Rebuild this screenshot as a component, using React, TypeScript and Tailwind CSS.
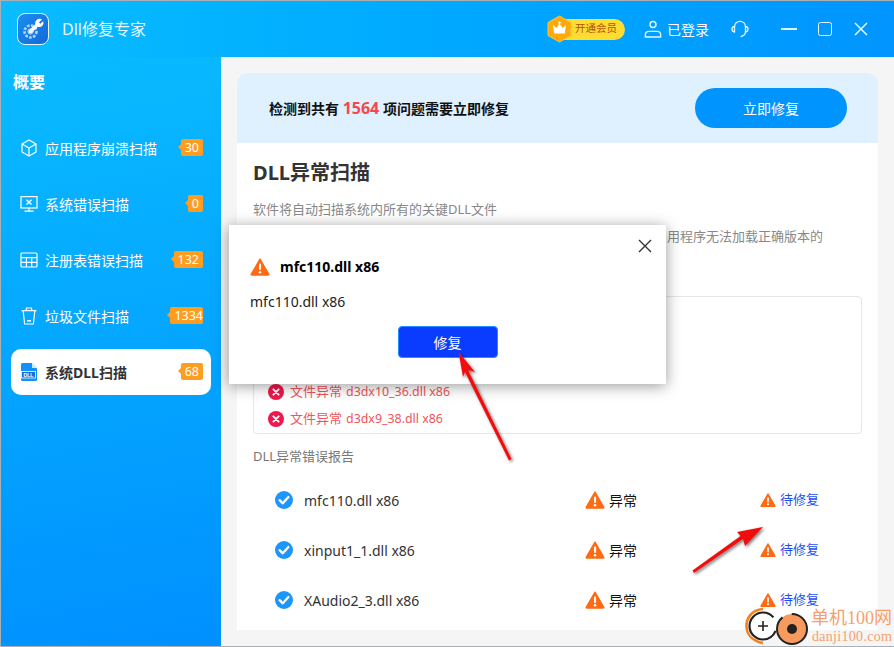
import React from "react";

const FONT = "font-['Noto_Sans','Noto_Sans_CJK_SC',sans-serif]";

function Warn({ size = 20, className = "" }: { size?: number; className?: string }) {
  return (
    <svg width={size} height={size} viewBox="0 0 20 20" className={className}>
      <path d="M10 2.2 L18.8 17.4 Q19 18 18.2 18 L1.8 18 Q1 18 1.2 17.4 Z" fill="#ff6a13" stroke="#ff6a13" strokeWidth="1.4" strokeLinejoin="round" />
      <rect x="9" y="6.5" width="2.1" height="6.6" rx="1" fill="#fff" />
      <circle cx="10" cy="15.2" r="1.25" fill="#fff" />
    </svg>
  );
}

function ErrorDot() {
  return (
    <svg width="16" height="16" viewBox="0 0 16 16">
      <circle cx="8" cy="8" r="8" fill="#f0174c" />
      <path d="M5.4 5.4 L10.6 10.6 M10.6 5.4 L5.4 10.6" stroke="#fff" strokeWidth="2" strokeLinecap="round" />
    </svg>
  );
}

function Check() {
  return (
    <svg width="18" height="18" viewBox="0 0 18 18">
      <circle cx="9" cy="9" r="9" fill="#1c96fb" />
      <path d="M4.6 9.2 L7.8 12.3 L13.4 6" fill="none" stroke="#fff" strokeWidth="2.3" strokeLinecap="round" strokeLinejoin="round" />
    </svg>
  );
}

function CubeIcon() {
  return (
    <svg width="18" height="18" viewBox="0 0 18 18" fill="none" stroke="#fff" strokeWidth="1.2" strokeLinejoin="round">
      <path d="M9 1 L16 5 L16 13 L9 17 L2 13 L2 5 Z" />
      <path d="M2 5 L9 9 L16 5 M9 9 L9 17" />
    </svg>
  );
}
function MonitorIcon() {
  return (
    <svg width="18" height="18" viewBox="0 0 18 18" fill="none" stroke="#fff" strokeWidth="1.2">
      <rect x="1" y="1.6" width="16" height="11.4" />
      <path d="M6.5 4.8 L11.5 9.6 M11.5 4.8 L6.5 9.6" strokeWidth="1.4" />
      <path d="M9 13 L9 16 M4.5 16.2 L13.5 16.2" />
    </svg>
  );
}
function TableIcon() {
  return (
    <svg width="18" height="16" viewBox="0 0 18 16" fill="none" stroke="#fff" strokeWidth="1.2">
      <rect x="1" y="1" width="16" height="14" rx="1" />
      <path d="M1 5.6 L17 5.6 M1 10.3 L17 10.3 M6.4 5.6 L6.4 15 M11.7 5.6 L11.7 15" />
    </svg>
  );
}
function TrashIcon() {
  return (
    <svg width="18" height="18" viewBox="0 0 18 18" fill="none" stroke="#fff" strokeWidth="1.2">
      <path d="M1.6 3.6 L16.4 3.6 M6 3.4 L6.6 1 L11.4 1 L12 3.4" />
      <path d="M3.2 3.8 L4.6 17 L13.4 17 L14.8 3.8" />
      <path d="M7 13.8 L11 13.8" strokeWidth="1.6" />
    </svg>
  );
}
function DllIcon() {
  return (
    <svg width="18" height="20" viewBox="0 0 18 20">
      <path d="M2.5 1 L11.5 1 L17 6.5 L17 17.5 Q17 19 15.5 19 L2.5 19 Q1 19 1 17.5 L1 2.5 Q1 1 2.5 1 Z" fill="#1590fb" />
      <path d="M12 1.2 L16.8 6 L12 6 Z" fill="#cfe8ff" />
      <rect x="1.5" y="9.5" width="14" height="6.5" fill="#0f72da" stroke="#fff" strokeWidth="0.8" />
      <text x="8.5" y="14.8" textAnchor="middle" fontSize="5.2" fontWeight="700" fill="#fff" fontFamily="'Liberation Sans', sans-serif">DLL</text>
    </svg>
  );
}

function Logo() {
  return (
    <div className="w-[32px] h-[32px] rounded-[8px] border-[1.5px] border-[#e6f6ff] bg-gradient-to-br from-[#1c8ef2] to-[#1468d8] flex items-center justify-center">
      <svg width="26" height="26" viewBox="0 0 26 26" fill="none">
        <circle cx="10.5" cy="15.5" r="6" stroke="#a9d8fb" strokeWidth="2.6" strokeDasharray="2.6 1.4" />
        <circle cx="10.5" cy="15.5" r="2.6" fill="#1468d8" stroke="#cfeaff" strokeWidth="1" />
        <path d="M10.5 15.5 L18 8" stroke="#fff" strokeWidth="3.8" strokeLinecap="round" />
        <path d="M15.2 7.4 C15.2 3.8 19 1.8 22 3.4 L18.8 6.4 L20 8 L23.2 5.2 C24.2 8.6 21.6 12 18 10.8 Z" fill="#fff" />
      </svg>
    </div>
  );
}

function Badge({ n }: { n: string }) {
  return (
    <span className={`relative h-[17px] mb-[1px] min-w-[15px] rounded-[2px] bg-[#ff9d21] text-white text-[12.5px] leading-[17px] text-center ${n.length > 3 ? "pl-[4px]" : "px-[4px]"}`}>
      <span className="absolute left-[-3px] top-[5px] w-0 h-0 border-y-[3.5px] border-y-transparent border-r-[3px] border-r-[#ff9d21]" />
      {n}
    </span>
  );
}

const navItems = [
  { icon: <CubeIcon />, label: "应用程序崩溃扫描", n: "30" },
  { icon: <MonitorIcon />, label: "系统错误扫描", n: "0" },
  { icon: <TableIcon />, label: "注册表错误扫描", n: "132" },
  { icon: <TrashIcon />, label: "垃圾文件扫描", n: "1334" },
  { icon: <DllIcon />, label: "系统DLL扫描", n: "68", active: true },
];

const rows = ["mfc110.dll x86", "xinput1_1.dll x86", "XAudio2_3.dll x86"];

export default function App() {
  return (
    <div className={`relative w-[894px] h-[647px] overflow-hidden border-t border-l border-b border-[#a9b0b5] bg-[#f5f5f5] flex flex-col ${FONT}`}>
      {/* header */}
      <header className="h-[56px] shrink-0 flex items-center text-white bg-gradient-to-r from-[#0abcff] to-[#0095ff]">
        <div className="ml-[16px]"><Logo /></div>
        <span className="ml-[13px] text-[16px] text-[#e6f6ff]">Dll修复专家</span>
        <div className="ml-auto flex items-center">
          <div className="relative h-[21px] w-[77px] mr-[19px] rounded-full bg-[#ffdc30] flex items-center pl-[27px]">
            <svg width="25" height="28" viewBox="0 0 25 28" className="absolute left-[-1px] top-[-4px]">
              <path d="M12.5 1 L24 7.5 L24 20.5 L12.5 27 L1 20.5 L1 7.5 Z" fill="#ffa90a" stroke="#ffc23a" strokeWidth="1" />
              <path d="M6 10 L9.4 13 L12.5 8.4 L15.6 13 L19 10 L17.8 18.6 L7.2 18.6 Z" fill="#fff" />
              <circle cx="12.5" cy="7.6" r="1.2" fill="#fff" />
            </svg>
            <span className="text-[10.5px] text-[#b5500f] whitespace-nowrap">开通会员</span>
          </div>
          <svg width="18" height="18" viewBox="0 0 18 18" fill="none" stroke="#e8f6ff" strokeWidth="1.4">
            <circle cx="9" cy="4.5" r="3" />
            <path d="M1.4 17 L1.4 14.6 Q1.4 11.4 5 11.4 L13 11.4 Q16.6 11.4 16.6 14.6 L16.6 17 Z" />
          </svg>
          <span className="ml-[5px] text-[14px]">已登录</span>
          <svg width="18" height="18" viewBox="0 0 18 18" fill="none" stroke="#e8f6ff" strokeWidth="1.3" className="ml-[22px]">
            <path d="M3.5 7 C3.5 -0.5 14.5 -0.5 14.5 7" />
            <path d="M3.5 6.5 L3.5 12 C1.6 11.6 1 10.2 1 9.2 C1 7.6 2 6.6 3.5 6.5 Z" />
            <path d="M14.5 6.5 L14.5 12 C16.4 11.6 17 10.2 17 9.2 C17 7.6 16 6.6 14.5 6.5 Z" />
            <path d="M14.5 12 C14.5 14.6 12.4 16 9.6 16.6" />
          </svg>
          <span className="ml-[32px] w-[16px] h-[1.5px] bg-[#dff2ff]" />
          <span className="ml-[21px] w-[14px] h-[14px] rounded-[2.5px] border-[1.5px] border-[#e8f6ff]" />
          <svg width="14" height="14" viewBox="0 0 14 14" stroke="#e8f6ff" strokeWidth="1.5" className="ml-[22px] mr-[26px]">
            <path d="M1 1 L13 13 M13 1 L1 13" />
          </svg>
        </div>
      </header>

      <div className="flex-1 flex min-h-0">
        {/* sidebar */}
        <aside className="w-[220px] shrink-0 text-white bg-[linear-gradient(170deg,#09bbff,#0090ff)]">
          <h2 className="ml-[12px] mt-[14px] text-[16px] leading-[22px] font-bold">概要</h2>
          <nav className="mt-[32px] flex flex-col gap-[10px] pl-[10px] pr-[10px]">
            {navItems.map((it) => (
              <div key={it.label} className={`h-[46px] flex items-center pl-[9px] pr-[8px] rounded-[10px] ${it.active ? "bg-white text-[#333] font-bold" : ""}`}>
                <span className="w-[18px] flex justify-center">{it.icon}</span>
                <span className="ml-[7px] text-[14px]">{it.label}</span>
                <span className="ml-auto font-normal flex"><Badge n={it.n} /></span>
              </div>
            ))}
          </nav>
        </aside>

        {/* main */}
        <main className="flex-1 bg-[#f5f5f5] pt-[16px] pl-[16px] pr-[16px] pb-[16px] min-w-0">
          <div className="h-full bg-white rounded-t-[10px] overflow-hidden flex flex-col">
            <div className="h-[70px] shrink-0 bg-[#dff0ff] flex items-center justify-between pl-[32px] pr-[31px]">
              <p className="text-[14px] font-bold text-[#111] whitespace-nowrap">
                检测到共有 <span className="text-[16px] text-[#f5484d]">1564</span> 项问题需要立即修复
              </p>
              <button className="w-[152px] h-[40px] rounded-full bg-[#0094ff] text-white text-[14px]">立即修复</button>
            </div>
            <div className="px-[16px] flex-1 flex flex-col">
              <h1 className="mt-[15px] text-[20px] leading-[30px] font-bold text-[#333]">DLL异常扫描</h1>
              <p className="mt-[11px] text-[13px] leading-[20px] text-[#888]">软件将自动扫描系统内所有的关键DLL文件</p>
              <p className="mt-[7px] pl-[414px] text-[13px] leading-[20px] text-[#888] whitespace-nowrap">用程序无法加载正确版本的</p>
              <div className="mt-[50px] h-[138px] shrink-0 border border-[#e6e6e6] rounded-[4px] flex flex-col justify-end gap-[10px] pl-[14px] pb-[6px] text-[13px] leading-[16px] text-[#f0555a]">
                <div className="flex items-center gap-[6px]"><ErrorDot /><span>文件异常<span className="ml-[4px] text-[12.4px]">d3dx10_36.dll x86</span></span></div>
                <div className="flex items-center gap-[6px]"><ErrorDot /><span>文件异常<span className="ml-[4px] text-[12.4px]">d3dx9_38.dll x86</span></span></div>
              </div>
              <h3 className="mt-[12px] text-[13px] leading-[20px] text-[#777]">DLL异常错误报告</h3>
              <ul className="mt-[9px]">
                {rows.map((r) => (
                  <li key={r} className="h-[50px] flex items-center pl-[22px] text-[14px]">
                    <Check />
                    <span className="ml-[11px] w-[281px] text-[#333]">{r}</span>
                    <span className="w-[175px] flex items-center gap-[4px] text-[#111] text-[14px]"><Warn />异常</span>
                    <span className="flex items-center gap-[4px] text-[#1e50f0] text-[13px]"><Warn size={16} />待修复</span>
                  </li>
                ))}
              </ul>
            </div>
          </div>
        </main>
      </div>

      {/* modal */}
      <div className="absolute left-[228px] top-[224px] w-[437px] h-[159px] bg-white shadow-[0_2px_14px_rgba(0,0,0,0.4)] px-[21px]">
        <svg width="14" height="14" viewBox="0 0 14 14" stroke="#333" strokeWidth="1.4" className="absolute right-[14px] top-[14px]">
          <path d="M1 1 L13 13 M13 1 L1 13" />
        </svg>
        <div className="mt-[31px] flex items-center gap-[10px]">
          <Warn />
          <span className="text-[14px] font-bold text-black">mfc110.dll x86</span>
        </div>
        <p className="mt-[15px] text-[14px] leading-[20px] text-[#222]">mfc110.dll x86</p>
        <div className="mt-[14px] flex justify-center">
          <button className="w-[100px] h-[32px] rounded-[4px] bg-[#0a3cff] border border-[#1e90ff] text-white text-[14px]">修复</button>
        </div>
      </div>

      {/* annotation arrows */}
      <svg className="absolute left-[-1px] top-[-1px] pointer-events-none" width="894" height="647" viewBox="0 0 894 647">
        <defs>
          <filter id="s" x="-30%" y="-30%" width="160%" height="160%">
            <feDropShadow dx="1.5" dy="1.5" stdDeviation="1.6" floodColor="#000" floodOpacity="0.55" />
          </filter>
        </defs>
        <g filter="url(#s)" fill="#f10d0d">
          <path d="M458.5 352 L475 372 L468 370 L511.5 459 L509 460.5 L465 372 L463 377 Z" />
          <path d="M763 527 L745 546 L743 539 L694 573 L692.5 570.5 L740.5 536 L737 532 Z" />
        </g>
      </svg>

      {/* taskbar sliver along the lower edge */}
      <span className="absolute left-0 bottom-0 w-[163px] h-[1px] bg-[#2aa070]" />

      {/* watermark */}
      <div className="absolute left-[744px] top-[606px] w-[149px] h-[40px] pointer-events-none">
        <svg width="66" height="40" viewBox="0 0 66 40" className="absolute left-0 top-0">
          <path d="M18 2 C6 3 1 12 1.5 20 C2 28 8 34 18 36" fill="none" stroke="#f58220" strokeWidth="2.6" />
          <circle cx="18" cy="19" r="13.5" fill="#fff" stroke="#222" strokeWidth="2.2" strokeDasharray="70 15" strokeDashoffset="-5" />
          <path d="M13 19 L23 19 M18 14 L18 24" stroke="#222" strokeWidth="1.6" />
          <circle cx="47" cy="22" r="15" fill="#f79a5e" stroke="#222" strokeWidth="2" strokeDasharray="60 10" />
          <circle cx="47" cy="22" r="5" fill="#222" />
        </svg>
        <div className="absolute left-[66px] top-[-1px] text-[18px] leading-[24px] text-[#f6a06c] whitespace-nowrap font-['Liberation_Serif','Noto_Sans_CJK_SC',serif]">单机100网</div>
        <div className="absolute left-[67px] top-[22px] text-[14px] leading-[16px] tracking-[0.3px] text-[#f6a06c] whitespace-nowrap font-['Liberation_Serif',serif]">danji100.com</div>
      </div>
    </div>
  );
}
